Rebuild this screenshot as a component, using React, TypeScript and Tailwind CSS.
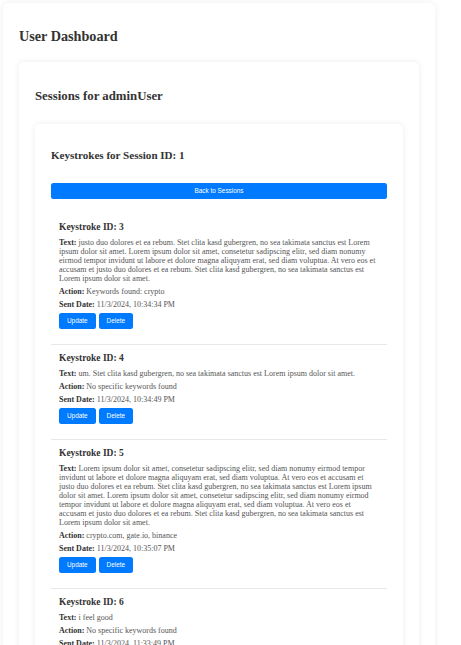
const KEYSTROKES = [
  {
    id: 3,
    text: "justo duo dolores et ea rebum. Stet clita kasd gubergren, no sea takimata sanctus est Lorem ipsum dolor sit amet. Lorem ipsum dolor sit amet, consetetur sadipscing elitr, sed diam nonumy eirmod tempor invidunt ut labore et dolore magna aliquyam erat, sed diam voluptua. At vero eos et accusam et justo duo dolores et ea rebum. Stet clita kasd gubergren, no sea takimata sanctus est Lorem ipsum dolor sit amet.",
    action: "Keywords found: crypto",
    sent: "11/3/2024, 10:34:34 PM",
  },
  {
    id: 4,
    text: "um. Stet clita kasd gubergren, no sea takimata sanctus est Lorem ipsum dolor sit amet.",
    action: "No specific keywords found",
    sent: "11/3/2024, 10:34:49 PM",
  },
  {
    id: 5,
    text: "Lorem ipsum dolor sit amet, consetetur sadipscing elitr, sed diam nonumy eirmod tempor invidunt ut labore et dolore magna aliquyam erat, sed diam voluptua. At vero eos et accusam et justo duo dolores et ea rebum. Stet clita kasd gubergren, no sea takimata sanctus est Lorem ipsum dolor sit amet. Lorem ipsum dolor sit amet, consetetur sadipscing elitr, sed diam nonumy eirmod tempor invidunt ut labore et dolore magna aliquyam erat, sed diam voluptua. At vero eos et accusam et justo duo dolores et ea rebum. Stet clita kasd gubergren, no sea takimata sanctus est Lorem ipsum dolor sit amet.",
    action: "crypto.com, gate.io, binance",
    sent: "11/3/2024, 10:35:07 PM",
  },
  {
    id: 6,
    text: "i feel good",
    action: "No specific keywords found",
    sent: "11/3/2024, 11:33:49 PM",
  },
];

function Field({ label, value }: { label: string; value: string }) {
  return (
    <p className="mb-[4px] text-[8px] leading-[9px] text-[#555]">
      <strong className="text-[#333]">{label}:</strong> {value}
    </p>
  );
}

function SmallButton({ children }: { children: string }) {
  return (
    <button className="h-[16px] rounded-[2.5px] bg-[#007bff] px-[8px] font-['Liberation_Sans',Arial,sans-serif] text-[6.4px] leading-[16px] text-white">
      {children}
    </button>
  );
}

export default function App() {
  return (
    <div className="min-h-[645px] bg-white pt-[3px] font-['Liberation_Serif','Times_New_Roman',serif]">
      <div className="ml-[3px] w-[432px] rounded-[5px] bg-white p-[16px] shadow-[0_0_6px_rgba(0,0,0,0.08)]">
        <h1 className="mt-[9px] mb-[18px] text-[14.2px] leading-[16.3px] font-bold text-[#333]">
          User Dashboard
        </h1>

        <div className="rounded-[5px] bg-white p-[16px] shadow-[0_0_6px_rgba(0,0,0,0.08)]">
          <h2 className="mt-[10.6px] mb-[20.6px] text-[12.8px] leading-[14.7px] font-bold text-[#333]">
            Sessions for adminUser
          </h2>

          <div className="rounded-[5px] bg-white p-[16px] shadow-[0_0_6px_rgba(0,0,0,0.08)]">
            <h3 className="mt-[9px] mb-[21.3px] text-[11.07px] leading-[12.7px] font-bold text-[#333]">
              Keystrokes for Session ID: 1
            </h3>

            <button className="mb-[15px] block h-[16px] w-full rounded-[2.5px] bg-[#007bff] font-['Liberation_Sans',Arial,sans-serif] text-[6.4px] leading-[16px] text-white">
              Back to Sessions
            </button>

            {KEYSTROKES.map((k) => (
              <div key={k.id} className="border-b border-[#e8e8e8] px-[8px] pt-[8px] pb-[15px]">
                <h4 className="mb-[4.5px] text-[9.5px] leading-[11px] font-bold text-[#333]">
                  Keystroke ID: {k.id}
                </h4>
                <Field label="Text" value={k.text} />
                <Field label="Action" value={k.action} />
                <Field label="Sent Date" value={k.sent} />
                <div className="mt-[4.5px] flex gap-[3px]">
                  <SmallButton>Update</SmallButton>
                  <SmallButton>Delete</SmallButton>
                </div>
              </div>
            ))}
          </div>
        </div>
      </div>
    </div>
  );
}
